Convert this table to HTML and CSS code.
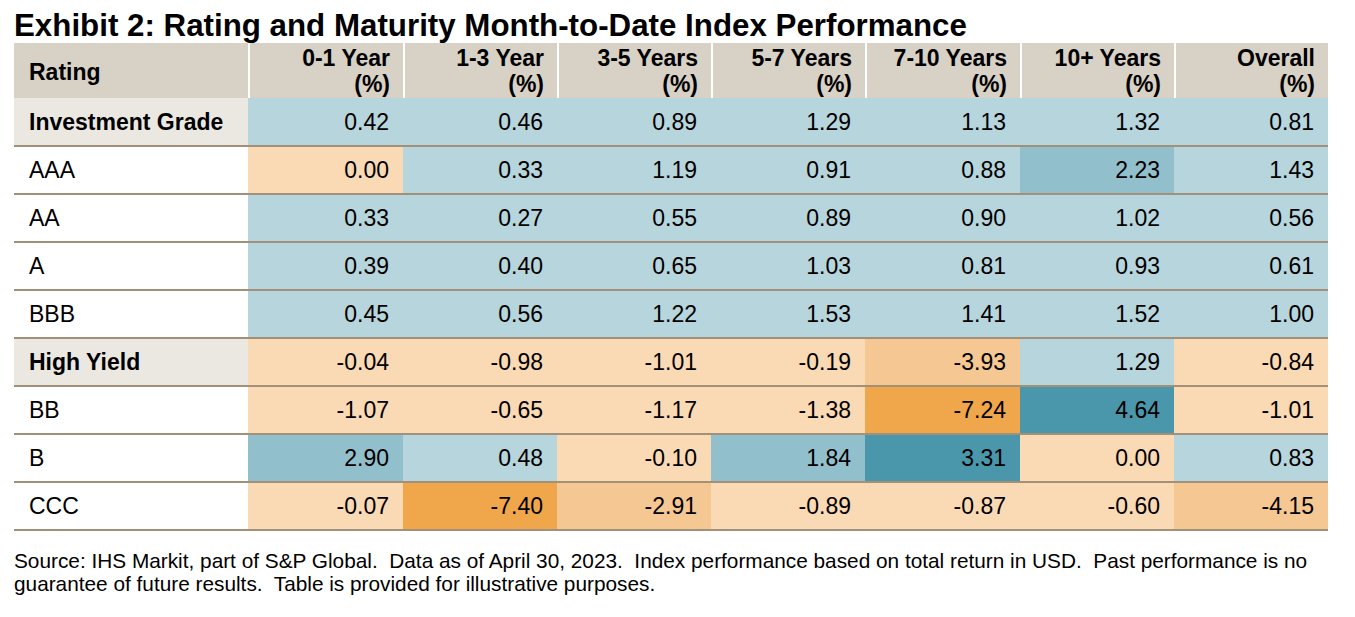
FILE: index.html
```html
<!DOCTYPE html>
<html lang="en">
<head>
<meta charset="utf-8">
<title>Exhibit 2</title>
<link rel="stylesheet" href="styles.css">
</head>
<body>
<div class="page">
  <h1 class="title">Exhibit 2: Rating and Maturity Month-to-Date Index Performance</h1>
  <table class="perf">
    <colgroup>
      <col class="c-rating">
      <col class="c-w155"><col class="c-w154"><col class="c-w154"><col class="c-w154">
      <col class="c-w155"><col class="c-w154"><col class="c-w154">
    </colgroup>
    <thead>
      <tr class="head-row">
        <th class="h-rating">Rating</th>
        <th class="h-num">0-1 Year<br>(%)</th>
        <th class="h-num">1-3 Year<br>(%)</th>
        <th class="h-num">3-5 Years<br>(%)</th>
        <th class="h-num">5-7 Years<br>(%)</th>
        <th class="h-num">7-10 Years<br>(%)</th>
        <th class="h-num">10+ Years<br>(%)</th>
        <th class="h-num">Overall<br>(%)</th>
      </tr>
    </thead>
    <tbody>
      <tr class="row group first">
        <td class="label">Investment Grade</td>
        <td class="v lb">0.42</td><td class="v lb">0.46</td><td class="v lb">0.89</td><td class="v lb">1.29</td><td class="v lb">1.13</td><td class="v lb">1.32</td><td class="v lb">0.81</td>
      </tr>
      <tr class="row">
        <td class="label">AAA</td>
        <td class="v pe">0.00</td><td class="v lb">0.33</td><td class="v lb">1.19</td><td class="v lb">0.91</td><td class="v lb">0.88</td><td class="v mb">2.23</td><td class="v lb">1.43</td>
      </tr>
      <tr class="row">
        <td class="label">AA</td>
        <td class="v lb">0.33</td><td class="v lb">0.27</td><td class="v lb">0.55</td><td class="v lb">0.89</td><td class="v lb">0.90</td><td class="v lb">1.02</td><td class="v lb">0.56</td>
      </tr>
      <tr class="row">
        <td class="label">A</td>
        <td class="v lb">0.39</td><td class="v lb">0.40</td><td class="v lb">0.65</td><td class="v lb">1.03</td><td class="v lb">0.81</td><td class="v lb">0.93</td><td class="v lb">0.61</td>
      </tr>
      <tr class="row">
        <td class="label">BBB</td>
        <td class="v lb">0.45</td><td class="v lb">0.56</td><td class="v lb">1.22</td><td class="v lb">1.53</td><td class="v lb">1.41</td><td class="v lb">1.52</td><td class="v lb">1.00</td>
      </tr>
      <tr class="row group">
        <td class="label">High Yield</td>
        <td class="v pe">-0.04</td><td class="v pe">-0.98</td><td class="v pe">-1.01</td><td class="v pe">-0.19</td><td class="v mo">-3.93</td><td class="v lb">1.29</td><td class="v pe">-0.84</td>
      </tr>
      <tr class="row">
        <td class="label">BB</td>
        <td class="v pe">-1.07</td><td class="v pe">-0.65</td><td class="v pe">-1.17</td><td class="v pe">-1.38</td><td class="v or">-7.24</td><td class="v dt">4.64</td><td class="v pe">-1.01</td>
      </tr>
      <tr class="row">
        <td class="label">B</td>
        <td class="v mb">2.90</td><td class="v lb">0.48</td><td class="v pe">-0.10</td><td class="v mb">1.84</td><td class="v dt">3.31</td><td class="v pe">0.00</td><td class="v lb">0.83</td>
      </tr>
      <tr class="row">
        <td class="label">CCC</td>
        <td class="v pe">-0.07</td><td class="v or">-7.40</td><td class="v mo">-2.91</td><td class="v pe">-0.89</td><td class="v pe">-0.87</td><td class="v pe">-0.60</td><td class="v mo">-4.15</td>
      </tr>
    </tbody>
  </table>
  <p class="note">Source: IHS Markit, part of S&amp;P Global.&nbsp; Data as of April 30, 2023.&nbsp; Index performance based on total return in USD.&nbsp; Past performance is no guarantee of future results.&nbsp; Table is provided for illustrative purposes.</p>
</div>
</body>
</html>
```

FILE: styles.css
```css
html, body {
  margin: 0;
  padding: 0;
  background: #ffffff;
}

body {
  font-family: "Liberation Sans", Arial, sans-serif;
  color: #000000;
}

.page {
  padding: 11px 0 0 14px;
}

.title {
  margin: 0 0 2px 0;
  font-size: 31.3px;
  line-height: 30px;
  font-weight: bold;
}

.perf {
  width: 1314px;
  table-layout: fixed;
  border-collapse: separate;
  border-spacing: 0;
  font-size: 23px;
}

.c-rating { width: 234px; }
.c-w155 { width: 155px; }
.c-w154 { width: 154px; }

.head-row {
  height: 55px;
}

.head-row th {
  background: #d8d1c6;
  font-weight: bold;
  line-height: 26px;
  padding: 2px 13px 0 15px;
}

.h-rating {
  text-align: left;
  vertical-align: middle;
}

.h-num {
  text-align: right;
  vertical-align: top;
  box-shadow: inset 2px 0 0 #ffffff;
}

.row {
  height: 48px;
}

.row.first {
  height: 49px;
}

.row td {
  border-bottom: 2px solid #a39079;
  padding: 0;
  vertical-align: middle;
  line-height: 26px;
}

.label {
  text-align: left;
  padding-left: 15px !important;
  background: #ffffff;
}

.group .label {
  background: #ebe8e1;
  font-weight: bold;
}

.v {
  text-align: right;
  padding-right: 14px !important;
}

.lb { background: #b6d5dc; }
.mb { background: #92bfcc; }
.dt { background: #4a97ab; }
.pe { background: #fad9b5; }
.mo { background: #f5c793; }
.or { background: #f0a64b; }

.note {
  margin: 18px 0 0 0;
  width: 1310px;
  font-size: 20.8px;
  line-height: 23px;
}
```
